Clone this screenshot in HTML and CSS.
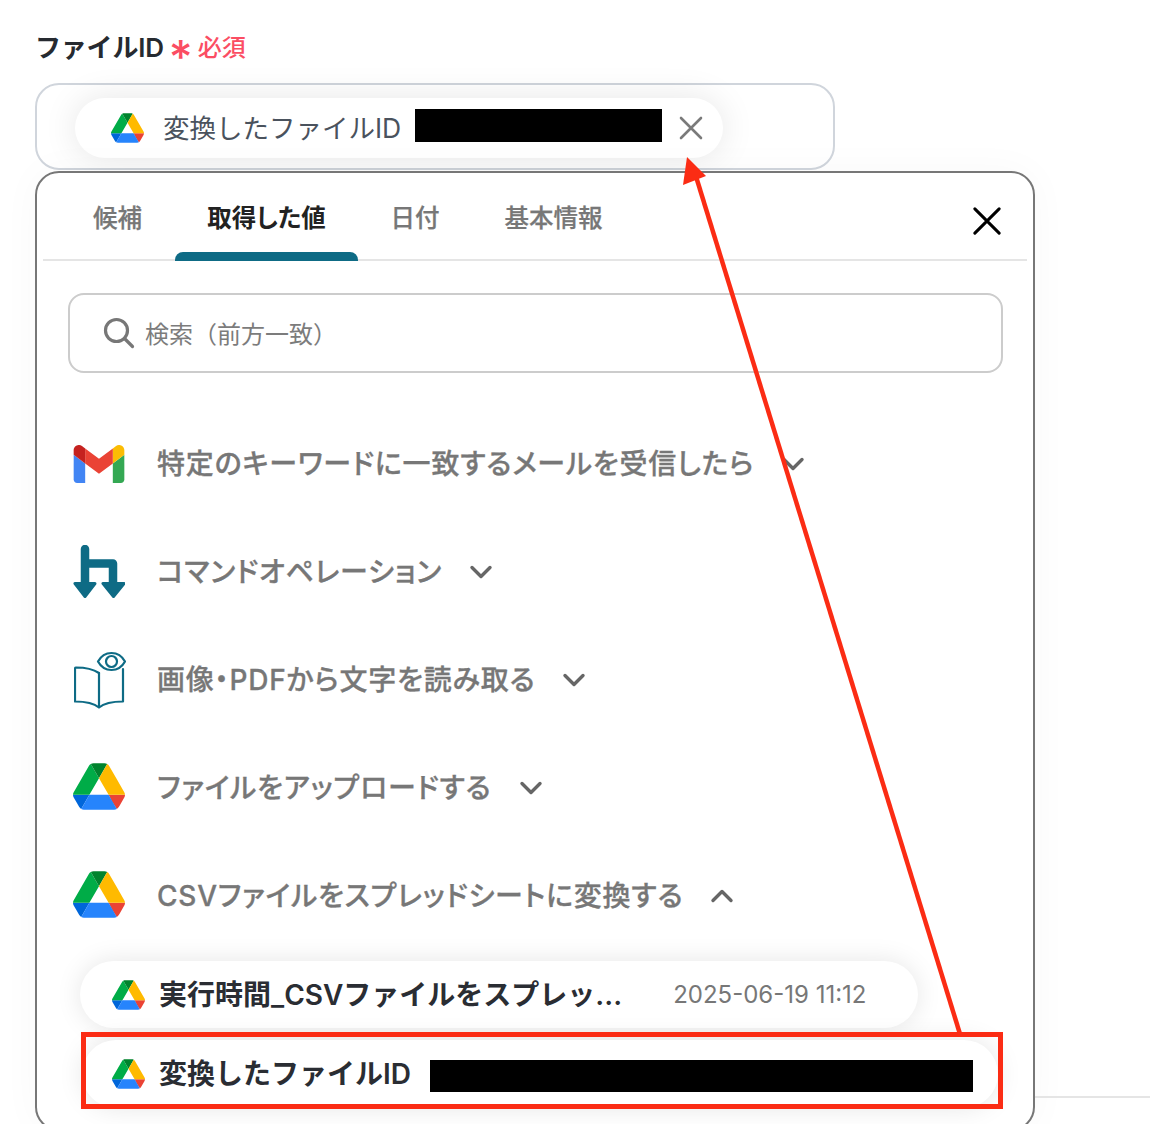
FILE: index.html
```html
<!DOCTYPE html>
<html lang="ja">
<head>
<meta charset="utf-8">
<title>ファイルID</title>
<link rel="stylesheet" href="styles.css">
</head>
<body>
<svg class="defs" width="0" height="0" aria-hidden="true">
  <symbol id="drive" viewBox="0 0 87.3 78">
    <path d="m6.6 66.85 3.85 6.65c.8 1.4 1.95 2.5 3.3 3.3l13.75-23.8h-27.5c0 1.55.4 3.1 1.2 4.5z" fill="#0066da"/>
    <path d="m43.65 25-13.75-23.8c-1.35.8-2.5 1.9-3.3 3.3l-25.4 44a9.06 9.06 0 0 0 -1.2 4.5h27.5z" fill="#00ac47"/>
    <path d="m73.55 76.8c1.35-.8 2.5-1.9 3.3-3.3l1.6-2.75 7.65-13.25c.8-1.4 1.2-2.95 1.2-4.5h-27.502l5.852 11.5z" fill="#ea4335"/>
    <path d="m43.65 25 13.75-23.8c-1.35-.8-2.9-1.2-4.5-1.2h-18.5c-1.6 0-3.15.45-4.5 1.2z" fill="#00832d"/>
    <path d="m59.8 53h-32.3l-13.75 23.8c1.35.8 2.9 1.2 4.5 1.2h50.8c1.6 0 3.15-.45 4.5-1.2z" fill="#2684fc"/>
    <path d="m73.4 26.5-12.7-22c-.8-1.4-1.95-2.5-3.3-3.3l-13.75 23.8 16.15 28h27.45c0-1.55-.4-3.1-1.2-4.5z" fill="#ffba00"/>
  </symbol>
  <symbol id="chev-down" viewBox="0 0 24 14"><path d="M3 2.500l9 9 9-9" fill="none" stroke="currentColor" stroke-width="3.400" stroke-linecap="round" stroke-linejoin="round"/></symbol>
  <symbol id="chev-up" viewBox="0 0 24 14"><path d="M3 11.500l9-9 9 9" fill="none" stroke="currentColor" stroke-width="3.400" stroke-linecap="round" stroke-linejoin="round"/></symbol>
</svg>

<main class="page">
  <div class="label-row">
    <span class="label">ファイルID</span>
    <span class="star">*</span>
    <span class="required">必須</span>
  </div>

  <div class="field">
    <div class="token">
      <svg class="token-icon"><use href="#drive"/></svg>
      <span class="token-text">変換したファイルID</span>
      <span class="mask mask-token"></span>
      <svg class="token-x" viewBox="0 0 24 24"><path d="M2 2l20 20M22 2L2 22" fill="none" stroke="#7a7a7a" stroke-width="2.600" stroke-linecap="round"/></svg>
    </div>
  </div>

  <div class="workspace">
    <section class="panel">
      <div class="tabs">
        <span class="tab tab-a">候補</span>
        <span class="tab tab-b is-active">取得した値</span>
        <span class="tab tab-c">日付</span>
        <span class="tab tab-d">基本情報</span>
        <svg class="close" viewBox="0 0 30 30"><path d="M2 2l26 26M28 2L2 28" fill="none" stroke="#000" stroke-width="3.200" stroke-linecap="round"/></svg>
      </div>

      <div class="search">
        <svg class="search-icon" viewBox="0 0 32 32"><circle cx="13.500" cy="13.500" r="11" fill="none" stroke="#777" stroke-width="3.200"/><path d="M21.500 21.500l8 8" stroke="#777" stroke-width="3.200" stroke-linecap="round"/></svg>
        <span class="search-text">検索（前方一致）</span>
      </div>

      <div class="groups">
        <div class="group">
          <svg class="app-icon gmail" viewBox="52 42 88 66">
            <path fill="#4285f4" d="M58 108h14V74L52 59v43c0 3.32 2.69 6 6 6"/>
            <path fill="#34a853" d="M120 108h14c3.32 0 6-2.69 6-6V59l-20 15"/>
            <path fill="#fbbc04" d="M120 48v26l20-15v-8c0-7.42-8.47-11.65-14.4-7.2"/>
            <path fill="#ea4335" d="M72 74V48l24 18 24-18v26L96 92"/>
            <path fill="#c5221f" d="M52 51v8l20 15V48l-5.6-4.2c-5.94-4.45-14.4-.22-14.4 7.2"/>
          </svg>
          <span class="group-name">特定のキーワードに一致するメールを受信したら</span>
          <svg class="chev"><use href="#chev-down"/></svg>
        </div>
        <div class="group">
          <svg class="app-icon tall-command" viewBox="0 0 52 54">
            <path d="M12 4v36M12 18.500h28V40" fill="none" stroke="#0e6b85" stroke-width="8.500" stroke-linecap="round" stroke-linejoin="round"/>
            <path d="M2 38.500h20L12 51.500zM30 38.500h21L40.500 51.500z" fill="#0e6b85" stroke="#0e6b85" stroke-width="3" stroke-linejoin="round"/>
          </svg>
          <span class="group-name">コマンドオペレーション</span>
          <svg class="chev"><use href="#chev-down"/></svg>
        </div>
        <div class="group">
          <svg class="app-icon tall-book" viewBox="0 0 52 58" fill="none" stroke="#0e6b85" stroke-width="2.200" stroke-linecap="round" stroke-linejoin="round">
            <path d="M25 22C19 18 11 16.500 2 16.500a1 1 0 0 0-1 1v33c9 0 18 1 24 6 6-5 15-6 24-6V18"/>
            <path d="M25 22v34"/>
            <path d="M24 10.500C27 5 32 2 37.500 2S48 5 51 10.500C48 16 43 19 37.500 19S27 16 24 10.500z" fill="#fff"/>
            <circle cx="37.500" cy="10.500" r="5.500"/>
          </svg>
          <span class="group-name">画像・PDFから文字を読み取る</span>
          <svg class="chev"><use href="#chev-down"/></svg>
        </div>
        <div class="group">
          <svg class="app-icon drive-icon"><use href="#drive"/></svg>
          <span class="group-name">ファイルをアップロードする</span>
          <svg class="chev"><use href="#chev-down"/></svg>
        </div>
        <div class="group">
          <svg class="app-icon drive-icon"><use href="#drive"/></svg>
          <span class="group-name">CSVファイルをスプレッドシートに変換する</span>
          <svg class="chev"><use href="#chev-up"/></svg>
        </div>
      </div>

      <div class="chip chip-time">
        <svg class="chip-icon"><use href="#drive"/></svg>
        <span class="chip-text">実行時間_CSVファイルをスプレッ...</span>
        <span class="chip-date">2025-06-19 11:12</span>
      </div>
      <div class="chip chip-id">
        <svg class="chip-icon"><use href="#drive"/></svg>
        <span class="chip-text">変換したファイルID</span>
        <span class="mask mask-chip"></span>
      </div>
    </section>
    <div class="side"></div>
  </div>
</main>

<div class="highlight"></div>
<svg class="arrow" viewBox="0 0 1150 1124">
  <path d="M960 1034L694 170" stroke="#fb2c14" stroke-width="4.500" fill="none"/>
  <path d="M687 157L706 176 683 185z" fill="#fb2c14"/>
</svg>
</body>
</html>
```
FILE: styles.css
```css
* { box-sizing: border-box; }
html, body { margin: 0; height: 1124px; overflow: hidden; background: #fff; }
body { font-family: Inter, "Noto Sans CJK JP", sans-serif; position: relative; }
.defs { position: absolute; }
.page { padding: 26px 0 0 35px; }

.label-row { display: flex; align-items: center; height: 38px; color: #222; }
.label { font-size: 26px; font-weight: 600; letter-spacing: -0.2px; color: #262a30; }
.star {
  align-self: flex-start; width: 26px; height: 24px; margin: 8px 0 0 5px;
  font-size: 46px; line-height: 46px; font-weight: 500; color: #fb4d63;
}
.required { font-size: 24px; color: #fb4d63; margin-left: 3px; font-weight: 500; }

.field {
  width: 800px; height: 87px; margin-top: 19px; padding: 13px 0 0 38px;
  border: 2px solid #d0d5dc; border-radius: 24px; background: #fff;
}
.token {
  width: 648px; height: 60px; padding-left: 36px; display: flex; align-items: center;
  border-radius: 30px; background: #fff; box-shadow: 0 0 34px rgba(0, 0, 0, 0.1);
}
.token-icon { width: 33px; height: 30px; flex: none; }
.token-text { margin: 0 0 4px 19px; font-size: 26.5px; color: #4a525d; white-space: nowrap; }
.mask { display: block; background: #000; flex: none; }
.mask-token { width: 247px; height: 33px; margin: 0 0 5px 14px; }
.token-x { width: 24px; height: 24px; margin-left: 17px; flex: none; }

.workspace { display: flex; margin-top: 1px; }
.panel {
  flex: none; width: 1000px; height: 960px; padding: 0 6px;
  border: 2px solid #777; border-radius: 24px; background: #fff;
  box-shadow: 0 0 40px rgba(0, 0, 0, 0.03);
}
.side { flex: 1; height: 2px; margin-top: 925px; background: #e5e5e5; }

.tabs { position: relative; height: 88px; display: flex; border-bottom: 2px solid #e5e5e5; }
.tab {
  position: relative; display: flex; justify-content: center; padding-top: 28px; height: 88px;
  font-size: 24.5px; line-height: 34px; font-weight: 500; color: #777;
  font-feature-settings: "palt"; -webkit-text-stroke: 0.25px #777;
}
.tab-a { width: 132px; justify-content: flex-start; padding-left: 50px; }
.tab-b { width: 183px; }
.tab-c { width: 114px; }
.tab-d { width: 163px; }
.tab.is-active { color: #222; font-weight: 600; -webkit-text-stroke: 0; }
.tab.is-active::after {
  content: ""; position: absolute; left: 0; right: 0; bottom: 0; height: 9px;
  background: #0e6b85; border-radius: 8px 8px 0 0;
}
.close { position: absolute; top: 34px; right: 26px; width: 28px; height: 28px; }

.search {
  display: flex; align-items: center; width: 935px; height: 80px; margin: 32px 0 0 25px; padding-left: 33px;
  border: 2px solid #ccc; border-radius: 16px;
}
.search-icon { width: 32px; height: 32px; flex: none; }
.search-text { margin: 0 0 2px 10px; font-size: 24px; color: #7c7c7c; white-space: nowrap; }

.groups { margin: 66px 0 0 31px; display: flex; flex-direction: column; gap: 58px; }
.group { display: flex; align-items: center; height: 50px; color: #777; }
.app-icon { width: 52px; height: 47px; flex: none; margin-left: -1px; }
.drive-icon { margin-bottom: 3px; }
.gmail { height: 38px; }
.tall-command { height: 54px; }
.tall-book { height: 58px; margin-left: 0; margin-right: -1px; }
.group-name {
  margin-left: 32px; font-size: 28px; line-height: 50px; font-weight: 500; white-space: nowrap;
  font-feature-settings: "palt"; letter-spacing: 0.8px; -webkit-text-stroke: 0.3px #777;
}
.chev { width: 24px; height: 14px; margin-left: 27px; color: #666; flex: none; }

.chip {
  display: flex; align-items: center; background: #fff; border-radius: 34px;
  box-shadow: 0 0 26px rgba(0, 0, 0, 0.1);
}
.chip-time { width: 838px; height: 67px; margin: 40px 0 0 37px; padding-left: 32px; }
.chip-id { width: 916px; height: 68px; margin: 12px 0 0 39px; padding-left: 30px; }
.chip-icon { width: 33px; height: 30px; flex: none; }
.chip-text { margin: 0 0 4px 14px; font-size: 28px; font-weight: 600; color: #2a2d33; white-space: nowrap; }
.chip-date { margin-left: 51px; font-size: 24px; color: #777; white-space: nowrap; }
.mask-chip { width: 543px; height: 32px; margin: 4px 0 0 19px; }

.highlight {
  position: absolute; left: 81px; top: 1032px; width: 922px; height: 77px;
  border: 5px solid #fb2c14;
}
.arrow { position: absolute; left: 0; top: 0; width: 1150px; height: 1124px; pointer-events: none; }
```
